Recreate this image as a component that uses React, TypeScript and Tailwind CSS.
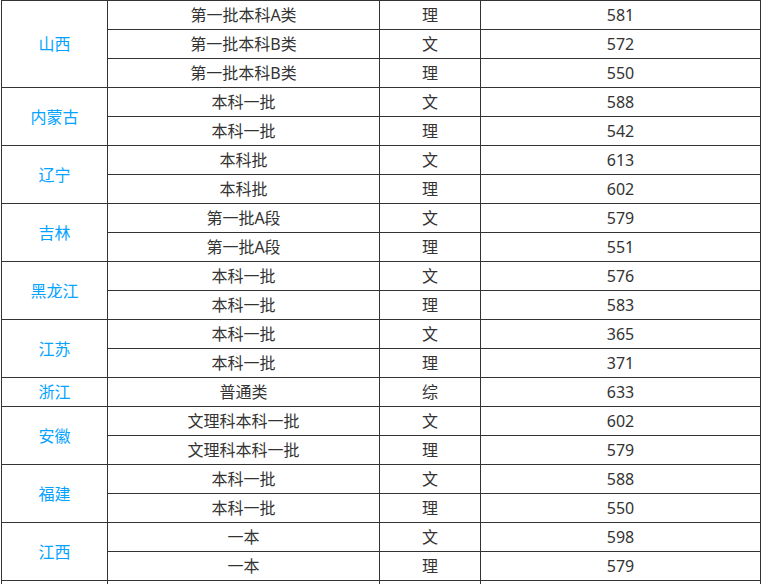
import React from "react";

type Row = { p?: string; span?: number; batch: string; type: string; score: string };

const groups: { name: string; rows: [string, string, string][] }[] = [
  { name: "山西", rows: [["第一批本科A类", "理", "581"], ["第一批本科B类", "文", "572"], ["第一批本科B类", "理", "550"]] },
  { name: "内蒙古", rows: [["本科一批", "文", "588"], ["本科一批", "理", "542"]] },
  { name: "辽宁", rows: [["本科批", "文", "613"], ["本科批", "理", "602"]] },
  { name: "吉林", rows: [["第一批A段", "文", "579"], ["第一批A段", "理", "551"]] },
  { name: "黑龙江", rows: [["本科一批", "文", "576"], ["本科一批", "理", "583"]] },
  { name: "江苏", rows: [["本科一批", "文", "365"], ["本科一批", "理", "371"]] },
  { name: "浙江", rows: [["普通类", "综", "633"]] },
  { name: "安徽", rows: [["文理科本科一批", "文", "602"], ["文理科本科一批", "理", "579"]] },
  { name: "福建", rows: [["本科一批", "文", "588"], ["本科一批", "理", "550"]] },
  { name: "江西", rows: [["一本", "文", "598"], ["一本", "理", "579"]] },
  { name: "", rows: [["", "", ""], ["", "", ""]] },
];

export default function App() {
  const rows: Row[] = [];
  groups.forEach((g) => {
    g.rows.forEach((r, i) => {
      rows.push({ p: i === 0 ? g.name : undefined, span: i === 0 ? g.rows.length : undefined, batch: r[0], type: r[1], score: r[2] });
    });
  });
  const td = "border border-[#333] p-0 h-[29px] text-center align-middle";
  return (
    <div className="w-[763px] h-[584px] overflow-hidden bg-white pl-px">
      <table
        className="border-collapse table-fixed text-[16px] leading-[20px] text-[#333]"
        style={{ fontFamily: '"Noto Sans", "Noto Sans CJK SC", sans-serif' }}
      >
        <colgroup>
          <col className="w-[106px]" />
          <col className="w-[272px]" />
          <col className="w-[101px]" />
          <col className="w-[280px]" />
        </colgroup>
        <tbody>
          {rows.map((r, i) => (
            <tr key={i}>
              {r.span !== undefined && (
                <td rowSpan={r.span} className={`${td} text-[#05a3ff]`}>
                  {r.p}
                </td>
              )}
              <td className={td}>{r.batch}</td>
              <td className={td}>{r.type}</td>
              <td className={td}>{r.score}</td>
            </tr>
          ))}
        </tbody>
      </table>
    </div>
  );
}
